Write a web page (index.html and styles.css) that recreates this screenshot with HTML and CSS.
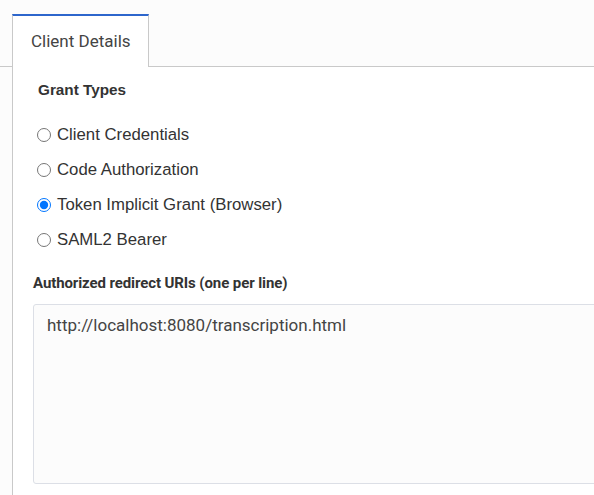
FILE: index.html
```html
<!DOCTYPE html>
<html>
<head>
<meta charset="utf-8">
<link rel="stylesheet" href="styles.css">
</head>
<body>
<div class="tabs">
  <div class="tab">Client Details</div>
</div>
<div class="panel">
  <div class="group">
    <h3 class="heading heading-grant">Grant Types</h3>
    <div class="radios">
      <label class="radio"><input type="radio" name="grant"> Client Credentials</label>
      <label class="radio"><input type="radio" name="grant"> Code Authorization</label>
      <label class="radio"><input type="radio" name="grant" checked> Token Implicit Grant (Browser)</label>
      <label class="radio"><input type="radio" name="grant"> SAML2 Bearer</label>
    </div>
  </div>
  <h3 class="heading heading-uris">Authorized redirect URIs (one per line)</h3>
  <textarea class="uris">http://localhost:8080/transcription.html</textarea>
</div>
</body>
</html>
```

FILE: styles.css
```css
html, body {
  margin: 0;
  padding: 0;
  background: #fcfcfc;
  overflow: hidden;
  height: 100%;
}
body {
  display: flex;
  flex-direction: column;
  font-family: Roboto, "Liberation Sans", sans-serif;
  color: #333;
}
.tabs {
  display: flex;
  padding: 14px 0 0 12px;
  border-bottom: 1px solid #c9c9c9;
}
.tab {
  box-sizing: border-box;
  height: 53px;
  margin-bottom: -1px;
  padding: 0 17px 1px 18px;
  background: #fff;
  border-top: 2px solid #2d66cc;
  border-left: 1px solid #c9c9c9;
  border-right: 1px solid #c9c9c9;
  display: flex;
  align-items: center;
  font-size: 17px;
  color: #444;
}
.panel {
  flex: 1;
  min-height: 0;
  overflow: hidden;
  margin-left: 12px;
  border-left: 1px solid #c9c9c9;
  background: #fff;
  padding: 13px 0 0 20px;
}
.group {
  padding-left: 5px;
}
.heading {
  margin: 0;
  font-size: 15px;
  line-height: 20px;
  font-weight: bold;
  color: #333;
}
.heading-grant {
  font-family: "Liberation Sans", Arial, sans-serif;
  font-size: 15.3px;
}
.radios {
  margin-top: 17px;
  display: flex;
  flex-direction: column;
}
.radio {
  height: 35px;
  display: flex;
  align-items: center;
  font-family: "Liberation Sans", Arial, sans-serif;
  font-size: 16.75px;
  color: #333;
}
.radio input {
  margin: 0 6px 0 -1px;
  width: 14px;
  height: 14px;
}
.heading-uris {
  margin-top: 16px;
  letter-spacing: -0.1px;
}
.uris {
  display: block;
  box-sizing: border-box;
  margin-top: 11px;
  width: calc(100% + 20px);
  height: 180px;
  padding: 10px 13px;
  border: 1px solid #dcdfe6;
  border-radius: 3px;
  background: #fcfcfc;
  font-family: Roboto, "Liberation Sans", sans-serif;
  font-size: 17px;
  line-height: 20px;
  color: #444;
  resize: none;
  outline: none;
}
```
